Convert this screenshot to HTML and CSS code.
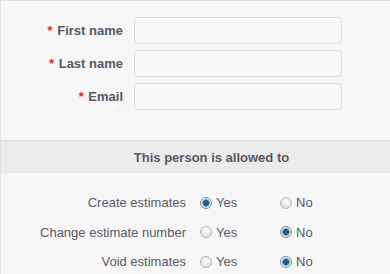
FILE: index.html
```html
<!DOCTYPE html>
<html lang="en">
<head>
  <meta charset="UTF-8" />
  <meta name="viewport" content="width=device-width, initial-scale=1.0"/>
  <title>Person permissions</title>
  <link rel="stylesheet" href="styles.css">
</head>
<body>
  <div class="panel">
    <form class="details">
      <label class="field-label" for="first"><span class="req">*</span> First name</label>
      <input class="field" id="first" type="text">
      <label class="field-label" for="last"><span class="req">*</span> Last name</label>
      <input class="field" id="last" type="text">
      <label class="field-label" for="email"><span class="req">*</span> Email</label>
      <input class="field" id="email" type="text">
    </form>

    <h2 class="section-title">This person is allowed to</h2>

    <div class="perms">
      <div class="perm-row">
        <span class="perm-name">Create estimates</span>
        <label class="opt"><input type="radio" name="p1" checked> Yes</label>
        <label class="opt"><input type="radio" name="p1"> No</label>
      </div>
      <div class="perm-row">
        <span class="perm-name">Change estimate number</span>
        <label class="opt"><input type="radio" name="p2"> Yes</label>
        <label class="opt"><input type="radio" name="p2" checked> No</label>
      </div>
      <div class="perm-row">
        <span class="perm-name">Void estimates</span>
        <label class="opt"><input type="radio" name="p3"> Yes</label>
        <label class="opt"><input type="radio" name="p3" checked> No</label>
      </div>
    </div>
  </div>
</body>
</html>
```

FILE: styles.css
```css
body {
  margin: 0;
  padding: 0;
  font-family: "Liberation Sans", Arial, sans-serif;
  color: #555;
  background: #f7f7f7;
  overflow: hidden;
}

.panel {
  border-left: 1px solid #e2e2e2;
  border-top: 1px solid #e2e2e2;
  background: #f7f7f7;
  min-height: 272px;
  border-bottom: 1px solid #e2e2e2;
}

.details {
  display: grid;
  grid-template-columns: 122px 208px;
  column-gap: 11px;
  row-gap: 6px;
  padding-top: 16px;
  margin: 0;
}

.field-label {
  font-size: 13px;
  font-weight: bold;
  color: #585866;
  text-align: right;
  align-self: center;
}

.req {
  color: #f02020;
  margin-right: 1px;
}

.field {
  height: 27px;
  box-sizing: border-box;
  border: 1px solid #dcdcdc;
  border-radius: 4px;
  background: #f9f9f9;
  margin: 0;
  padding: 0 6px;
  font: inherit;
}

.section-title {
  margin: 30px 0 0;
  height: 33px;
  line-height: 33px;
  box-sizing: border-box;
  border-top: 1px solid #e0e0e0;
  background: #ebebeb;
  font-size: 13px;
  font-weight: bold;
  color: #585866;
  text-align: center;
  padding-left: 32px;
}

.perms {
  padding-top: 15px;
}

.perm-row {
  display: grid;
  grid-template-columns: 185px 80px auto;
  column-gap: 14px;
  height: 29.5px;
  align-items: center;
  font-size: 13px;
}

.perm-name {
  text-align: right;
  color: #585866;
}

.perm-row .opt:last-child {
  margin-left: -14px;
}

.opt {
  display: flex;
  align-items: center;
  gap: 4px;
  color: #585866;
}

.opt input {
  appearance: none;
  width: 12px;
  height: 12px;
  margin: 0;
  border-radius: 50%;
  border: 1px solid #b4b4b4;
  background: radial-gradient(circle at 50% 35%, #fdfdfd, #dcdcdc);
  box-sizing: border-box;
  position: relative;
}

.opt input:checked {
  border-color: #8a8a8a;
  background: radial-gradient(circle, #1d5f8f 0 2.5px, #6a9cc0 3.5px, #f0f0f0 4px, #d0d0d0 100%);
}
```
